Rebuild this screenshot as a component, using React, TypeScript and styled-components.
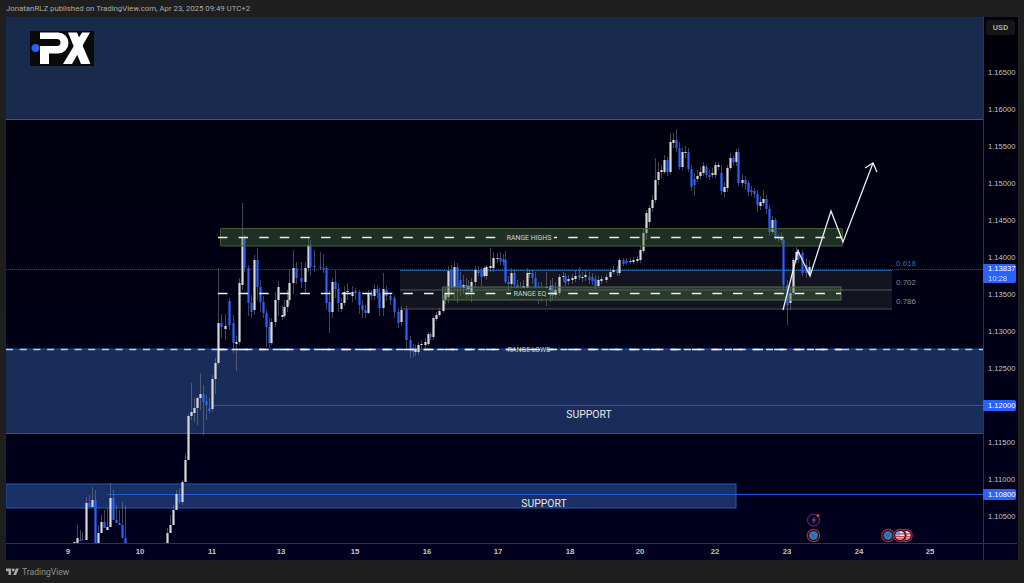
import React from "react";
import styled, { createGlobalStyle } from "styled-components";

const GlobalStyle = createGlobalStyle`
  html, body {
    margin: 0;
    padding: 0;
    background: #1f1f1f;
  }
`;

// [x, bodyTop, bodyBottom, up, wickTop?, wickBottom?]  all in page pixels
type Candle = [number, number, number, 0 | 1, number?, number?];

const candles: Candle[] = [
  [74, 542, 543, 1], [77, 538, 543, 1, 525], [80, 540, 541, 0, 530], [82, 539, 540, 0, 532], [86, 503, 540, 1, 497], [89, 503, 507, 0, 495],
  [92, 500, 507, 1, 487], [95, 500, 543, 0, 490], [98, 533, 543, 1, 525], [101, 522, 533, 1, 515], [104, 522, 528, 0, 510], [107, 527, 530, 1, 508],
  [110, 498, 527, 1, 483], [113, 498, 520, 0, 490], [116, 520, 523, 0, 505], [119, 523, 525, 0, 510], [122, 525, 538, 0, 502], [125, 538, 543, 0, 505],
  [167, 533, 543, 1, 528], [170, 525, 533, 1, 515], [173, 510, 525, 1, 505], [176, 494, 510, 1, 490], [179, 494, 502, 0, 488, 504], [182, 482, 502, 1, 480, 505],
  [185, 460, 482, 1, 454], [188, 416, 460, 1, 414, 440], [191, 412, 416, 1, 383, 420], [194, 408, 413, 1, 398, 422], [197, 398, 408, 1, 397, 425], [200, 394, 398, 1, 373, 410],
  [203, 394, 402, 0, 385, 435], [206, 401, 405, 0, 395, 420], [209, 408, 411, 0, 398, 413], [212, 379, 409, 1, 375, 412], [215, 363, 379, 1, 358, 394], [218, 323, 363, 1, 268, 365],
  [221, 323, 327, 0, 314, 338], [225, 326, 329, 1, 314, 340], [229, 301, 325, 0, 298, 330], [233, 323, 343, 0, 315, 353], [236, 342, 344, 1, 336, 371], [239, 283, 342, 1, 278, 345],
  [242, 238, 285, 1, 203, 290], [244, 238, 268, 0, 235, 272], [248, 268, 303, 0, 265, 316], [251, 303, 312, 0, 295, 318], [254, 260, 310, 1, 255, 315], [257, 260, 287, 0, 248, 300],
  [260, 287, 302, 0, 280, 312], [263, 302, 313, 0, 296, 318], [266, 313, 327, 0, 310, 347], [269, 327, 343, 0, 318, 348], [271, 322, 343, 1, 318, 345], [275, 300, 322, 1, 292, 327],
  [278, 287, 300, 1, 281, 316], [282, 315, 317, 1, 305, 320], [284, 307, 316, 1, 300, 318], [287, 300, 307, 1, 290, 312], [289, 283, 300, 1, 270, 305], [293, 268, 283, 1, 250, 294],
  [296, 268, 278, 0, 262, 284], [301, 278, 282, 0, 262, 288], [305, 268, 282, 1, 262, 293], [308, 245, 268, 1, 238, 272], [310, 245, 267, 0, 240, 275], [314, 266, 267, 0, 250, 272],
  [320, 267, 268, 0, 252, 270], [323, 268, 269, 0, 254, 273], [326, 268, 303, 0, 266, 310], [329, 302, 312, 0, 290, 333], [332, 282, 312, 1, 278, 318], [335, 282, 289, 0, 270, 298],
  [338, 289, 303, 0, 283, 312], [341, 303, 309, 1, 298, 312], [344, 292, 303, 1, 286, 306], [347, 291, 292, 1, 283, 300], [352, 292, 296, 1, 286, 302], [355, 291, 293, 0, 288, 300],
  [359, 292, 305, 0, 290, 314], [362, 305, 310, 0, 300, 318], [365, 310, 313, 0, 305, 318], [368, 293, 313, 1, 290, 314], [371, 293, 296, 0, 290, 300], [374, 289, 296, 1, 284, 300],
  [377, 289, 293, 0, 285, 298], [379, 293, 308, 0, 288, 316], [383, 289, 308, 1, 273, 316], [386, 290, 296, 0, 286, 301], [390, 296, 300, 0, 292, 305], [394, 298, 312, 0, 295, 318],
  [398, 312, 323, 0, 308, 328], [401, 310, 322, 1, 306, 326], [406, 309, 340, 0, 306, 348], [410, 340, 348, 0, 336, 358], [413, 348, 352, 0, 344, 357], [415, 350, 352, 1, 345, 356],
  [418, 345, 352, 1, 342, 355], [421, 344, 345, 1, 340, 349], [425, 342, 345, 1, 338, 348], [428, 334, 344, 1, 332, 346], [430, 334, 337, 0, 332, 340], [433, 318, 337, 1, 316, 340],
  [436, 315, 319, 1, 312, 321], [439, 311, 315, 1, 308, 317], [443, 300, 311, 1, 295, 313], [445, 293, 300, 1, 288, 304], [448, 271, 297, 1, 266, 303], [451, 270, 288, 0, 265, 295],
  [454, 267, 287, 1, 262, 300], [457, 267, 287, 0, 263, 303], [460, 280, 287, 0, 272, 296], [463, 285, 288, 1, 275, 294], [466, 285, 290, 0, 278, 298], [468, 286, 289, 1, 280, 296],
  [471, 282, 292, 1, 278, 302], [475, 270, 282, 1, 266, 288], [478, 270, 273, 0, 266, 276], [481, 270, 277, 0, 268, 286], [484, 268, 276, 1, 266, 278], [486, 267, 276, 1, 265, 280],
  [490, 266, 268, 1, 248, 272], [493, 258, 268, 1, 252, 272], [497, 258, 259, 1, 253, 263], [500, 258, 261, 0, 252, 265], [503, 259, 262, 0, 254, 266], [505, 260, 282, 0, 251, 284],
  [508, 282, 284, 0, 276, 290], [511, 273, 284, 1, 268, 293], [514, 273, 285, 0, 270, 290], [517, 285, 288, 0, 280, 296], [520, 288, 290, 0, 282, 300], [523, 286, 290, 1, 280, 300],
  [527, 273, 290, 1, 268, 296], [529, 273, 274, 1, 270, 278], [532, 273, 278, 0, 270, 284], [535, 278, 287, 0, 272, 294], [538, 287, 290, 0, 282, 304], [541, 288, 290, 0, 282, 302],
  [546, 287, 296, 1, 272, 306], [550, 286, 290, 1, 280, 302], [552, 285, 296, 0, 278, 300], [555, 290, 295, 1, 282, 298], [559, 277, 293, 1, 274, 296], [563, 276, 277, 1, 272, 282],
  [565, 276, 283, 0, 273, 286], [568, 279, 281, 1, 275, 285], [572, 278, 280, 1, 274, 284], [575, 276, 279, 1, 270, 282], [579, 275, 278, 0, 267, 280], [582, 277, 278, 1, 272, 282],
  [585, 275, 277, 1, 270, 281], [589, 277, 280, 0, 272, 284], [592, 277, 281, 0, 273, 285], [595, 279, 286, 0, 275, 289], [598, 280, 286, 1, 276, 288], [601, 279, 281, 1, 276, 284],
  [606, 277, 280, 1, 274, 283], [610, 272, 277, 1, 268, 279], [613, 270, 272, 1, 266, 274], [617, 270, 273, 0, 266, 276], [619, 260, 273, 1, 258, 276], [623, 260, 264, 0, 258, 266],
  [626, 261, 263, 0, 258, 265], [630, 261, 262, 1, 258, 264], [633, 260, 262, 1, 257, 264], [637, 259, 261, 1, 256, 263], [640, 250, 260, 1, 246, 263], [643, 233, 251, 1, 228, 253],
  [646, 213, 233, 1, 210, 240], [649, 208, 222, 1, 205, 226], [652, 200, 208, 1, 195, 212], [655, 180, 200, 1, 158, 203], [658, 172, 180, 1, 162, 185], [661, 170, 172, 1, 165, 178],
  [664, 160, 172, 1, 155, 174], [667, 160, 172, 0, 157, 176], [670, 142, 172, 1, 133, 175], [673, 140, 143, 1, 133, 148], [676, 140, 148, 0, 129, 152], [679, 148, 167, 0, 142, 170],
  [682, 152, 167, 1, 148, 170], [685, 152, 153, 1, 146, 158], [688, 152, 169, 0, 148, 172], [691, 169, 187, 0, 165, 191], [694, 179, 185, 0, 173, 196], [697, 176, 179, 1, 170, 182],
  [700, 172, 176, 1, 167, 180], [703, 166, 173, 1, 162, 176], [706, 167, 175, 0, 165, 178], [709, 175, 177, 0, 170, 180], [712, 173, 175, 1, 168, 178], [715, 165, 175, 1, 162, 178],
  [718, 165, 167, 1, 162, 170], [721, 173, 191, 0, 165, 195], [724, 187, 192, 1, 182, 197], [727, 168, 188, 1, 165, 192], [730, 158, 168, 1, 153, 170], [733, 158, 162, 0, 156, 166],
  [736, 152, 162, 1, 149, 166], [738, 152, 183, 0, 148, 186], [742, 180, 183, 1, 174, 187], [745, 180, 184, 0, 176, 190], [748, 183, 192, 0, 180, 196], [751, 190, 192, 0, 186, 196],
  [754, 191, 194, 0, 188, 198], [757, 194, 205, 0, 190, 212], [760, 202, 206, 1, 196, 210], [763, 199, 203, 1, 190, 206], [766, 199, 209, 0, 195, 214], [769, 209, 232, 0, 205, 236],
  [772, 220, 232, 1, 216, 234], [775, 220, 237, 0, 218, 240], [778, 237, 239, 0, 234, 242], [781, 237, 240, 1, 232, 243], [783, 240, 285, 0, 238, 290], [787, 285, 305, 0, 280, 325],
  [790, 293, 303, 1, 288, 310], [793, 260, 293, 1, 258, 296], [796, 252, 260, 1, 247, 263], [798, 252, 259, 0, 249, 263], [802, 253, 273, 0, 250, 276], [806, 265, 273, 0, 258, 278],
  [809, 267, 274, 1, 260, 276],
];

const days: [string, number][] = [
  ["9", 68], ["10", 140], ["11", 212], ["13", 281], ["15", 355], ["16", 427], ["17", 498],
  ["18", 570], ["20", 640], ["22", 715], ["23", 787], ["24", 859], ["25", 930],
];

// one row per 0.005 on the scale, the blank one is covered by the 1.12000 badge
const ticks = ["1.16500", "1.16000", "1.15500", "1.15000", "1.14500", "1.14000", "1.13500", "1.13000", "1.12500", "", "1.11500", "1.11000", "1.10500"];

const Page = styled.div`
  width: 1024px;
  height: 583px;
  display: flex;
  flex-direction: column;
  background: #1f1f1f;
  overflow: hidden;
  font-family: Roboto, "Liberation Sans", Arial, sans-serif;
`;

const Header = styled.div`
  height: 17px;
  flex: none;
  display: flex;
  align-items: center;
  padding-left: 6px;
  color: #ababab;
  font-size: 7.8px;
`;

const Frame = styled.div`
  height: 543px;
  margin: 0 6px;
  flex: none;
  display: grid;
  grid-template-columns: 977px 34px;
  grid-template-rows: 526px 17px;
  background: linear-gradient(#00000a, #00001f);
`;

const Plot = styled.div`
  position: relative;
  overflow: hidden;
`;

const ChartSvg = styled.svg`
  display: block;
  width: 977px;
  height: 526px;
`;

const LogoBox = styled.svg`
  position: absolute;
  left: 24px;
  top: 14px;
  width: 64px;
  height: 35px;
`;

const ZoneText = styled.text`
  font-family: Roboto, "Liberation Sans", Arial, sans-serif;
  font-size: 6.9px;
  fill: #c9d0c9;
  text-anchor: middle;
  dominant-baseline: central;
`;

const SupportText = styled.text`
  font-family: Roboto, "Liberation Sans", Arial, sans-serif;
  font-size: 10.4px;
  fill: #e6e6e6;
  text-anchor: middle;
  dominant-baseline: central;
`;

const FibText = styled.text<{ $blue?: boolean }>`
  font-family: "Liberation Sans", Arial, sans-serif;
  font-size: 8px;
  fill: ${(p) => (p.$blue ? "#1f6fb5" : "#8c8c8c")};
  dominant-baseline: central;
`;

const PriceAxis = styled.div`
  position: relative;
  box-sizing: border-box;
  border-left: 1px solid #34343c;
  padding-top: 37.5px;
  display: flex;
  flex-direction: column;
`;

const UsdButton = styled.div`
  position: absolute;
  top: 3px;
  left: 2px;
  width: 29px;
  height: 15px;
  box-sizing: border-box;
  background: #161616;
  border-radius: 3px;
  color: #b8b8b8;
  font-size: 8px;
  font-weight: 500;
  display: flex;
  align-items: center;
  justify-content: center;
`;

const Tick = styled.div`
  height: 36.97px;
  flex: none;
  display: flex;
  align-items: center;
  padding-left: 4px;
  color: #c4c4c4;
  font-family: "Liberation Sans", Arial, sans-serif;
  font-size: 7.6px;
`;

const Badge = styled.div<{ $top: number; $tall?: boolean }>`
  position: absolute;
  left: -1px;
  top: ${(p) => p.$top}px;
  width: 33px;
  height: ${(p) => (p.$tall ? 19 : 11)}px;
  box-sizing: border-box;
  padding-left: 5px;
  background: #2962ff;
  border-radius: 0 2px 2px 0;
  color: #fff;
  font-family: "Liberation Sans", Arial, sans-serif;
  font-size: 7.6px;
  line-height: ${(p) => (p.$tall ? "9.5px" : "11px")};
`;

const BadgeSub = styled.div`
  color: #cfdcff;
`;

const TimeAxis = styled.div`
  position: relative;
  border-top: 1px solid #34343c;
`;

const Day = styled.span`
  position: absolute;
  top: 3px;
  transform: translateX(-50%);
  color: #c4c4c4;
  font-family: "Liberation Sans", Arial, sans-serif;
  font-size: 7.8px;
  font-weight: 700;
`;

const AxisCorner = styled.div`
  border-top: 1px solid #34343c;
  border-left: 1px solid #34343c;
`;

const Footer = styled.div`
  flex: 1;
  display: flex;
  align-items: center;
  gap: 3px;
  padding-left: 6px;
  color: #8f8f8f;
  font-size: 8.6px;
`;

const TvMark = styled.svg`
  width: 13px;
  height: 9px;
  fill: #a8a8a8;
`;

const Wick = styled.line`
  stroke: #7d7d85;
  stroke-opacity: 0.55;
  stroke-width: 1;
`;

const Body = styled.rect<{ $up: boolean }>`
  fill: ${(p) => (p.$up ? "#d8d8d8" : "#2962ff")};
`;

function EuFlag({ x, y }: { x: number; y: number }) {
  return (
    <g>
      <circle cx={x} cy={y} r={6.2} fill="#120316" stroke="#b3263f" strokeWidth={1.2} />
      <circle cx={x} cy={y} r={4.6} fill="#1f6fb5" />
      <circle cx={x} cy={y} r={2.6} fill="none" stroke="#c9a93a" strokeWidth={0.7} strokeDasharray="0.8 0.8" />
    </g>
  );
}

function UsFlag({ x, y }: { x: number; y: number }) {
  return (
    <g>
      <circle cx={x} cy={y} r={6.2} fill="#120316" stroke="#b3263f" strokeWidth={1.2} />
      <circle cx={x} cy={y} r={4.6} fill="#f0e6e8" />
      <path d={`M${x - 4.2} ${y + 0.4}h8.4v1.3h-8.4zM${x - 3.2} ${y + 2.8}h6.4v1.1h-6.4zM${x} ${y - 2.2}h4.1v1.2h-4.1z`} fill="#d8384a" />
      <path d={`M${x - 4.5} ${y}a4.6 4.6 0 0 1 4.5 -4.6v4.6z`} fill="#5a9be6" />
    </g>
  );
}

function PriceChart() {
  return (
    <ChartSvg viewBox="6 17 977 526">
      {/* zones that sit behind the candles */}
      <rect x={6} y={17} width={977} height={102} fill="#182b4d" />
      <line x1={6} y1={119.5} x2={983} y2={119.5} stroke="#2a5c8f" />
      <rect x={6} y={349} width={977} height={84} fill="#1a2d5a" />
      <line x1={6} y1={433.5} x2={983} y2={433.5} stroke="#1f5a9e" />
      <rect x={6} y={484} width={730} height={24} fill="#1a2f66" stroke="#1f5fae" />
      <rect x={400} y={270} width={492} height={39} fill="#13141f" />
      <line x1={6} y1={269.5} x2={983} y2={269.5} stroke="#1f4a9a" strokeDasharray="1 1" />
      <line x1={400} y1={270.5} x2={892} y2={270.5} stroke="#1d5a9e" />
      <line x1={400} y1={290} x2={892} y2={290} stroke="#55555e" />
      <line x1={400} y1={309} x2={892} y2={309} stroke="#4c4c58" />
      <line x1={213} y1={405.5} x2={983} y2={405.5} stroke="#2456b8" />
      <line x1={107} y1={494.5} x2={983} y2={494.5} stroke="#2456d8" />
      <line x1={6} y1={349} x2={983} y2={349} stroke="#1f5a9e" />

      {candles.map(([x, top, bottom, up, wickTop, wickBottom]) => (
        <g key={x}>
          <Wick x1={x + 0.5} x2={x + 0.5} y1={wickTop ?? top} y2={Math.min(wickBottom ?? bottom, 543)} />
          <Body x={x - 0.6} y={top} width={2.2} height={Math.max(bottom - top, 1)} $up={up === 1} />
        </g>
      ))}

      {/* range boxes lie over the candles */}
      <rect x={220.5} y={228.5} width={622} height={17.5} rx={1} fill="rgba(72,112,62,0.42)" stroke="#3f5c3c" />
      <rect x={442.5} y={287} width={398.5} height={13} fill="rgba(72,112,62,0.42)" stroke="#4c6e48" />

      <line x1={6} y1={349.5} x2={218} y2={349.5} stroke="#a3d4f2" strokeWidth={1.3} strokeDasharray="7 6.7" />
      <line x1={842} y1={349.5} x2={983} y2={349.5} stroke="#a3d4f2" strokeWidth={1.3} strokeDasharray="7 6.7" />
      <line x1={218} y1={349.5} x2={842} y2={349.5} stroke="#dde6ec" strokeWidth={1.3} strokeDasharray="7 6.7" />
      <line x1={218} y1={349.5} x2={842} y2={349.5} stroke="#f2f2f2" strokeWidth={1.4} strokeDasharray="9.5 11.1" />
      <line x1={218} y1={237.5} x2={842} y2={237.5} stroke="#e6ece4" strokeWidth={1.4} strokeDasharray="9.5 11.1" />
      <line x1={218} y1={293.5} x2={841} y2={293.5} stroke="#ededed" strokeWidth={1.4} strokeDasharray="9.5 11.1" />

      <rect x={504} y={232} width={50} height={11} fill="#233026" />
      <rect x={511} y={288} width={37} height={11} fill="#233026" />
      <ZoneText x={529} y={237.5}>RANGE HIGHS</ZoneText>
      <ZoneText x={530} y={293.5}>RANGE EQ</ZoneText>
      <ZoneText x={529} y={349.5}>RANGE LOWS</ZoneText>
      <SupportText x={589} y={414}>SUPPORT</SupportText>
      <SupportText x={544} y={503}>SUPPORT</SupportText>
      <FibText x={896} y={263} $blue>0.618</FibText>
      <FibText x={896} y={282}>0.702</FibText>
      <FibText x={896} y={301}>0.786</FibText>

      {/* projected path */}
      <polyline points="783,310 798,251 810,276 831,211 843,242 873,163" fill="none" stroke="#eeeeee" strokeWidth={1.3} />
      <polyline points="865,168 873,163 877,172" fill="none" stroke="#eeeeee" strokeWidth={1.3} />

      {/* event markers */}
      <circle cx={813.5} cy={520} r={6} fill="#0c0418" stroke="#6b2f86" strokeWidth={1} />
      <path d="M815 516.5l-3.2 4h2l-1 3.2 3.2-4.2h-2z" fill="#9a45c0" />
      <circle cx={818} cy={515.5} r={1.5} fill="#e5343f" />
      <EuFlag x={813.5} y={535.5} />
      <EuFlag x={888} y={535.5} />
      <UsFlag x={906} y={535.5} />
      <UsFlag x={900} y={535.5} />
    </ChartSvg>
  );
}

function PxLogo() {
  return (
    <LogoBox viewBox="0 0 64 35">
      <rect width={64} height={35} fill="#0a0a0a" />
      <path d="M10 1.5H28a10.5 10.5 0 0 1 0 21H19V33H10V15H27a3.5 3.5 0 0 0 0-7H10z" fill="#fff" />
      <path d="M60 1.5H52L33 33H42z" fill="#fff" />
      <path d="M38 1.5H47L60.5 33H51z" fill="#fff" />
      <circle cx={5.5} cy={17} r={4} fill="#2f5fff" />
    </LogoBox>
  );
}

export default function App() {
  return (
    <Page>
      <GlobalStyle />
      <Header>JonatanRLZ published on TradingView.com, Apr 23, 2025 09:49 UTC+2</Header>
      <Frame>
        <Plot>
          <PriceChart />
          <PxLogo />
        </Plot>
        <PriceAxis>
          <UsdButton>USD</UsdButton>
          {ticks.map((t, i) => (
            <Tick key={i}>{t}</Tick>
          ))}
          <Badge $top={247} $tall>
            1.13837
            <BadgeSub>10:28</BadgeSub>
          </Badge>
          <Badge $top={383}>1.12000</Badge>
          <Badge $top={472}>1.10800</Badge>
        </PriceAxis>
        <TimeAxis>
          {days.map(([label, x]) => (
            <Day key={label} style={{ left: x - 6 }}>
              {label}
            </Day>
          ))}
        </TimeAxis>
        <AxisCorner />
      </Frame>
      <Footer>
        <TvMark viewBox="0 0 36 24">
          <path d="M14 22H7V11H0V4h14v18zM28 22h-8l7.5-18h8L28 22z" />
          <circle cx={20} cy={8} r={4} />
        </TvMark>
        TradingView
      </Footer>
    </Page>
  );
}
